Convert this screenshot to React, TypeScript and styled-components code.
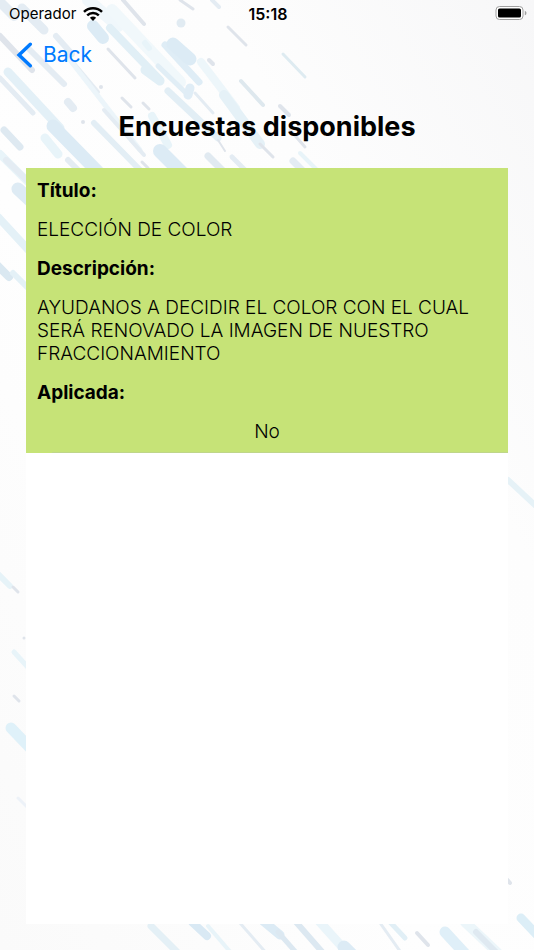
import React from "react";
import styled, { createGlobalStyle } from "styled-components";

const GlobalStyle = createGlobalStyle`
  *, *::before, *::after { box-sizing: border-box; }
  body {
    margin: 0;
    background: #fcfcfd;
    color: #000;
    font-family: Inter, "Liberation Sans", sans-serif;
  }
`;

const Screen = styled.div`
  position: relative;
  isolation: isolate;
  display: flex;
  flex-direction: column;
  min-height: 100vh;
  padding-bottom: 26px;
  overflow: hidden;
  background: linear-gradient(to bottom left, #f7f7f8, #fdfdfd 30%, #fefefe 60%, #fafafa);
`;

const Backdrop = styled.svg`
  position: absolute;
  inset: 0;
  z-index: -1;
  width: 100%;
  height: 100%;
`;

const StatusBar = styled.div`
  display: grid;
  grid-template-columns: 1fr auto 1fr;
  align-items: center;
  height: 28px;
  padding: 0 7px 0 9px;
  font-size: 15px;
  line-height: 20px;
`;

const Carrier = styled.div`
  display: flex;
  align-items: center;
  gap: 7px;
`;

const Clock = styled.time`
  font-size: 16px;
  font-weight: 600;
`;

const BatteryIcon = styled.svg`
  justify-self: end;
`;

const NavBar = styled.nav`
  display: flex;
  align-items: center;
  height: 54px;
  padding: 0 16px;
`;

const BackButton = styled.button`
  display: flex;
  align-items: center;
  gap: 10px;
  padding: 0;
  border: 0;
  background: none;
  color: #007aff;
  font: inherit;
  font-size: 21px;
  line-height: 28px;
  cursor: pointer;
`;

const Main = styled.main`
  display: flex;
  flex: 1;
  flex-direction: column;
  padding: 0 26px;
`;

const Title = styled.h1`
  margin: 27px 0 23px;
  font-size: 27px;
  font-weight: 700;
  line-height: 36px;
  text-align: center;
`;

const SurveyList = styled.ul`
  flex: 1;
  margin: 0;
  padding: 0;
  background: #fff;
  list-style: none;
`;

const SurveyCard = styled.li`
  position: relative;
  display: flex;
  flex-direction: column;
  gap: 16px;
  padding: 11px 11px 10px;
  background: #c6e377;

  &::after {
    content: "";
    position: absolute;
    right: 0;
    bottom: 0;
    left: 26px;
    height: 1px;
    background: #bfd68a;
  }
`;

const Label = styled.h2`
  margin: 0;
  font-size: 19px;
  font-weight: 700;
  line-height: 23px;
`;

const Value = styled.p<{ $centered?: boolean }>`
  margin: 0;
  font-size: 19px;
  font-weight: 350;
  line-height: 23px;
  text-align: ${({ $centered }) => ($centered ? "center" : "left")};
`;

type Streak = [number, number, number, number, number, string];

const SKY = "#dcebf5";
const PALE = "#e8f4f9";
const STEEL = "#dfe4eb";
const MIST = "#e4ecf3";

const streaks: Streak[] = [
  [0, 2, 14, 16, 10, MIST],
  [22, 8, 44, 30, 9, MIST],
  [88, 0, 118, 26, 12, "#f0f7fb"],
  [123, 0, 144, 24, 4, STEEL],
  [112, 10, 180, 82, 12, "#f1f8fb"],
  [145, 43, 149, 48, 6, PALE],
  [0, 36, 32, 70, 6, STEEL],
  [30, 50, 64, 84, 6, MIST],
  [56, 36, 72, 54, 6, MIST],
  [66, 54, 98, 92, 4, MIST],
  [108, 49, 135, 78, 3, STEEL],
  [70, 60, 140, 150, 5, "#ecf5fa"],
  [110, 28, 160, 80, 8, "#e1eff6"],
  [145, 70, 160, 81, 9, "#e1eff6"],
  [93, 26, 103, 38, 12, SKY],
  [0, 78, 33, 113, 5, MIST],
  [8, 72, 60, 128, 9, "#e3f0f7"],
  [53, 126, 98, 172, 13, SKY],
  [45, 138, 58, 154, 9, PALE],
  [68, 102, 73, 108, 8, MIST],
  [4, 130, 20, 147, 7, "#dee9f1"],
  [0, 154, 30, 184, 8, PALE],
  [68, 160, 80, 172, 6, MIST],
  [94, 123, 140, 170, 6, "#e3eef5"],
  [104, 110, 144, 155, 4, MIST],
  [122, 98, 131, 107, 3, STEEL],
  [143, 103, 149, 109, 3, STEEL],
  [101, 87, 101, 87, 4, STEEL],
  [83, 122, 83, 122, 4, STEEL],
  [142, 162, 148, 168, 3, STEEL],
  [152, 116, 168, 145, 8, PALE],
  [160, 151, 185, 176, 14, SKY],
  [168, 91, 218, 138, 7, "#e2eef5"],
  [158, 66, 188, 95, 5, "#e1eef6"],
  [190, 88, 188, 95, 9, "#e0edf6"],
  [165, 45, 199, 82, 7, "#dfedf6"],
  [173, 44, 190, 59, 13, SKY],
  [218, 140, 225, 151, 2, STEEL],
  [195, 93, 213, 113, 3, MIST],
  [201, 62, 236, 108, 8, "#edf6fa"],
  [224, 95, 260, 144, 10, "#e5f1f7"],
  [260, 144, 273, 157, 3, STEEL],
  [181, 23, 181, 23, 9, "#e1ebf2"],
  [180, 0, 193, 9, 3, STEEL],
  [212, 0, 219, 7, 4, MIST],
  [228, 27, 246, 45, 3, STEEL],
  [283, 54, 305, 77, 3, "#deebf1"],
  [209, 60, 213, 64, 4, STEEL],
  [241, 81, 263, 105, 4, "#dee8ee"],
  [280, 106, 289, 115, 4, STEEL],
  [290, 130, 305, 147, 3, STEEL],
  [208, 156, 222, 170, 7, "#e1eaf1"],
  [232, 157, 246, 171, 5, MIST],
  [293, 161, 304, 172, 7, MIST],
  [300, 153, 317, 170, 4, PALE],
  [6, 160, 34, 187, 6, MIST],
  [18, 189, 32, 202, 13, "#deebf4"],
  [-2, 217, 34, 256, 8, "#e4f1f7"],
  [-4, 264, 9, 277, 8, "#dae8f1"],
  [13, 273, 34, 294, 6, "#e4f1f7"],
  [508, 480, 538, 508, 6, "#e6f2f7"],
  [-4, 572, 10, 586, 6, "#e6f3f8"],
  [13, 587, 18, 592, 3, STEEL],
  [24, 638, 24, 638, 3, STEEL],
  [14, 652, 34, 674, 5, PALE],
  [14, 696, 19, 701, 3, STEEL],
  [11, 728, 34, 752, 11, "#dff1f9"],
  [18, 798, 30, 810, 3, "#edf2f8"],
  [151, 926, 182, 957, 7, "#e4f0f6"],
  [192, 922, 207, 936, 8, "#d9e9f4"],
  [208, 926, 232, 954, 4, PALE],
  [240, 923, 268, 955, 3, MIST],
  [262, 920, 280, 935, 9, SKY],
  [278, 932, 300, 957, 5, "#dce8f1"],
  [296, 922, 324, 954, 6, "#dce8f1"],
  [318, 920, 345, 950, 9, "#eaf5fa"],
  [344, 947, 354, 957, 13, SKY],
  [378, 920, 402, 954, 3, MIST],
  [390, 922, 405, 938, 5, "#e1eff6"],
  [417, 933, 428, 945, 4, STEEL],
  [445, 932, 468, 957, 11, "#dfeff8"],
  [465, 922, 502, 957, 10, "#ecf6fa"],
  [476, 932, 496, 952, 6, "#dfe9f1"],
  [504, 876, 510, 883, 4, STEEL],
  [521, 918, 540, 938, 9, "#dceef7"],
];

function App() {
  return (
    <>
      <GlobalStyle />
      <Screen>
        <Backdrop viewBox="0 0 534 950" preserveAspectRatio="xMidYMid slice" aria-hidden="true">
          {streaks.map(([x1, y1, x2, y2, width, color], i) => (
            <path
              key={i}
              d={`M${x1} ${y1}L${x2} ${y2}`}
              stroke={color}
              strokeWidth={width}
              strokeLinecap="round"
            />
          ))}
        </Backdrop>

        <StatusBar>
          <Carrier>
            <span>Operador</span>
            <svg width="20" height="15" viewBox="0 0 20 15" fill="none" stroke="#000" aria-label="Wi-Fi">
              <path d="M1 4.9C6 .1 14 .1 19 4.9M4.2 8.3c3.3-3 8.3-3 11.6 0" strokeWidth="2.5" />
              <path d="M10 13.9 6.9 10.8c1.8-1.6 4.4-1.6 6.2 0Z" fill="#000" stroke="none" />
            </svg>
          </Carrier>
          <Clock>15:18</Clock>
          <BatteryIcon width="32" height="16" viewBox="0 0 32 16" aria-label="Battery">
            <rect x="1" y=".5" width="27" height="13" rx="3.5" fill="#fff" stroke="#a0a0a0" />
            <rect x="3" y="2.5" width="23" height="9" rx="1.6" />
            <path d="M29.8 4.7c2.2.8 2.2 3.8 0 4.6Z" fill="#a0a0a0" />
          </BatteryIcon>
        </StatusBar>

        <NavBar>
          <BackButton type="button">
            <svg width="17" height="26" viewBox="0 0 17 26" fill="none" stroke="currentColor" aria-hidden="true">
              <path d="M14.3 2.2 3 13l11.3 10.8" strokeWidth="3.4" strokeLinecap="round" strokeLinejoin="miter" />
            </svg>
            Back
          </BackButton>
        </NavBar>

        <Main>
          <Title>Encuestas disponibles</Title>
          <SurveyList>
            <SurveyCard>
              <Label>Título:</Label>
              <Value>ELECCIÓN DE COLOR</Value>
              <Label>Descripción:</Label>
              <Value>AYUDANOS A DECIDIR EL COLOR CON EL CUAL SERÁ RENOVADO LA IMAGEN DE NUESTRO FRACCIONAMIENTO</Value>
              <Label>Aplicada:</Label>
              <Value $centered>No</Value>
            </SurveyCard>
          </SurveyList>
        </Main>
      </Screen>
    </>
  );
}

export default App;
